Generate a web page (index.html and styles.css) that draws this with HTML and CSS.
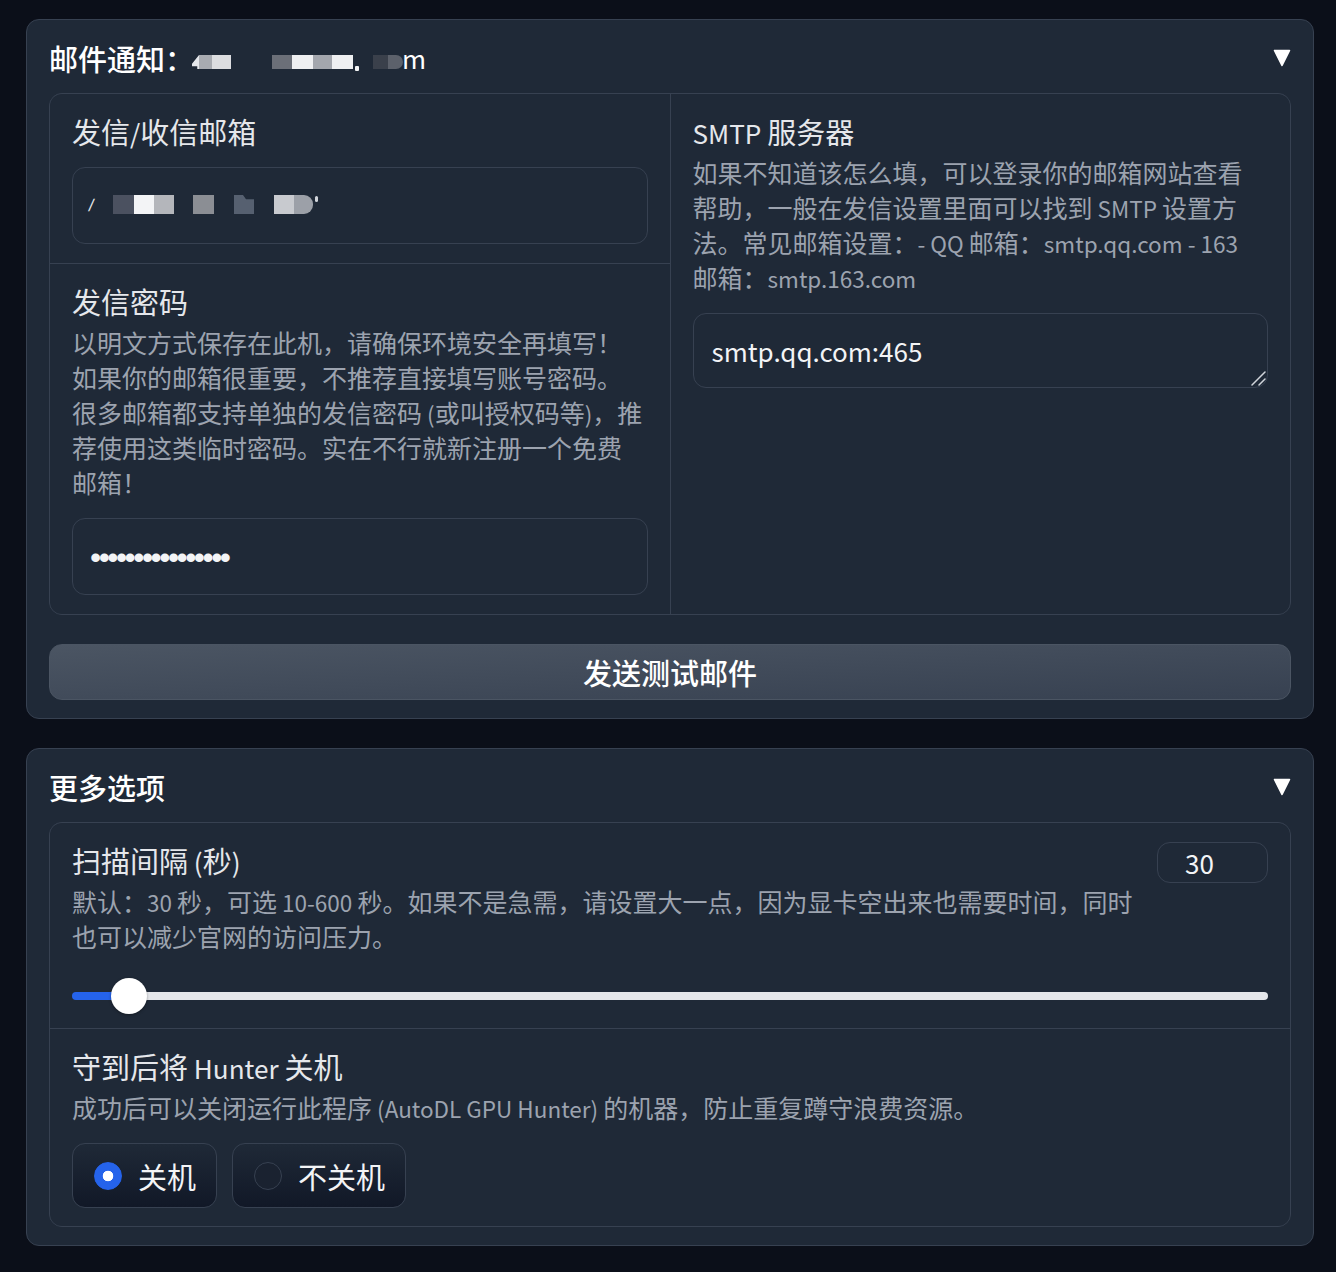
FILE: index.html
```html
<!DOCTYPE html>
<html lang="zh-CN">
<head>
<meta charset="utf-8">
<title>AutoDL GPU Hunter</title>
<link rel="stylesheet" href="styles.css">
</head>
<body>
<div class="page">
  <section class="panel">
    <div class="acc-head">
      <div class="acc-title">邮件通知：<span class="mask"><i class="c h0"></i><i class="c h1"></i><i class="c h2"></i><i class="c h3"></i><i class="c h4"></i><i class="c h5"></i><i class="c h6"></i><i class="c hdot"></i><i class="c h7"></i><i class="c h8"></i><span class="hm">m</span></span></div>
      <svg class="caret" viewBox="0 0 18 18"><path d="M1.5 1.5H16.5L9 16.5Z" fill="#fff" stroke="#fff" stroke-width="1.6" stroke-linejoin="round"/></svg>
    </div>
    <div class="form two">
      <div class="col">
        <div class="block">
          <div class="label">发信<span class="en">/</span>收信邮箱</div>
          <div class="input fake"><span class="slash">/</span><i class="c e1"></i><i class="c e2"></i><i class="c e3"></i><i class="c e4"></i><i class="c e5"></i><i class="c e6"></i><i class="c e7"></i><i class="c e8"></i></div>
        </div>
        <div class="block">
          <div class="label has-info">发信密码</div>
          <div class="info">以明文方式保存在此机，请确保环境安全再填写！如果你的邮箱很重要，不推荐直接填写账号密码。很多邮箱都支持单独的发信密码<span class="en"> (</span>或叫授权码等<span class="en">)</span>，推荐使用这类临时密码。实在不行就新注册一个免费邮箱！</div>
          <input class="input pw" type="text" value="••••••••••••••••" readonly>
        </div>
      </div>
      <div class="col">
        <div class="block">
          <div class="label has-info"><span class="en">SMTP </span>服务器</div>
          <div class="info">如果不知道该怎么填，可以登录你的邮箱网站查看帮助，一般在发信设置里面可以找到<span class="en"> SMTP </span>设置方法。常见邮箱设置：<span class="en">- QQ </span>邮箱：<span class="en">smtp.qq.com - 163 </span>邮箱：<span class="en">smtp.163.com</span></div>
          <textarea class="input area" rows="1">smtp.qq.com:465</textarea>
        </div>
      </div>
    </div>
    <button class="btn" type="button">发送测试邮件</button>
  </section>

  <section class="panel">
    <div class="acc-head">
      <div class="acc-title">更多选项</div>
      <svg class="caret" viewBox="0 0 18 18"><path d="M1.5 1.5H16.5L9 16.5Z" fill="#fff" stroke="#fff" stroke-width="1.6" stroke-linejoin="round"/></svg>
    </div>
    <div class="form">
      <div class="block slider-block">
        <div class="row-head">
          <div class="grow">
            <div class="label has-info">扫描间隔<span class="en"> (</span>秒<span class="en">)</span></div>
            <div class="info wide">默认：<span class="en">30 </span>秒，可选<span class="en"> 10-600 </span>秒。如果不是急需，请设置大一点，因为显卡空出来也需要时间，同时也可以减少官网的访问压力。</div>
          </div>
          <input class="num" type="number" value="30" min="10" max="600">
        </div>
        <input class="range" type="range" min="10" max="600" value="30" style="--fill: 4.7%">
      </div>
      <div class="block last">
        <div class="label has-info">守到后将<span class="en"> Hunter </span>关机</div>
        <div class="info wide">成功后可以关闭运行此程序<span class="en"> (AutoDL GPU Hunter) </span>的机器，防止重复蹲守浪费资源。</div>
        <div class="radios">
          <label class="radio"><span class="dot on"></span><span>关机</span></label>
          <label class="radio"><span class="dot"></span><span>不关机</span></label>
        </div>
      </div>
    </div>
  </section>
</div>
</body>
</html>
```
FILE: styles.css
```css
* { box-sizing: border-box; }
html, body { margin: 0; background: #0b0f19; }
body {
  font-family: "Noto Sans CJK SC", "Noto Sans", sans-serif;
  color: #e5e7eb;
  min-height: 1272px;
}
.page { padding: 19px 0 27px 26px; }

/* Latin runs: the CJK font's Latin is drawn ~11% larger than Source Sans */
.en { font-size: 0.9em; line-height: 1; }

.panel {
  width: 1288px;
  background: #1f2937;
  border: 1px solid #374151;
  border-radius: 13px;
  padding: 20px 22px 18px;
}
.panel + .panel { margin-top: 29px; }

.acc-head {
  display: flex;
  align-items: center;
  justify-content: space-between;
  height: 36px;
  margin-bottom: 17px;
}
.acc-title {
  display: flex;
  align-items: center;
  font-size: 29px;
  line-height: 36px;
  font-weight: 500;
  color: #fff;
  white-space: nowrap;
}
.caret { width: 18px; height: 18px; flex: none; }

/* redaction mosaic */
.mask { display: inline-flex; align-items: center; height: 36px; }
.c { display: block; font-style: normal; }
.mask .c { height: 14px; margin-top: 8px; }
.h0 { width: 7px; margin-left: -2px; background: #e5e7eb; clip-path: polygon(100% 0, 100% 100%, 75% 100%, 75% 80%, 0 80%, 0 62%); }
.h1 { width: 13px; background: #a8abb1; }
.h2 { width: 19px; background: #dcdde0; }
.h3 { width: 20px; margin-left: 41px; background: #6b6f78; }
.h4 { width: 21px; background: #eeeff1; }
.h5 { width: 19px; background: #a3a6ad; }
.h6 { width: 21px; background: #eeeff1; }
.mask .hdot { width: 4px; height: 5px; margin: 21px 0 0 2px; background: #f3f4f6; border-radius: 1px; }
.h7 { width: 15px; margin-left: 14px; background: #3a404b; }
.h8 { width: 15px; background: #5c616b; border-radius: 0 7px 7px 0; }
.hm { display: block; font-size: 26px; font-weight: 400; margin-left: -1px; }

.form {
  display: grid;
  gap: 1px;
  background: #374151;
  border: 1px solid #374151;
  border-radius: 13px;
  overflow: hidden;
}
.form.two { grid-template-columns: 1fr 1fr; }
.col { display: flex; flex-direction: column; gap: 1px; }
.col > .block:last-child { flex: 1; }

.block {
  background: #1f2937;
  padding: 20px 22px 19px;
}
.block.slider-block { padding-bottom: 14px; }
.block.last { padding-bottom: 18px; }

.label {
  font-size: 29px;
  line-height: 34px;
  color: #e5e7eb;
  margin-bottom: 19px;
}
.label.has-info { margin-bottom: 7px; }
.info {
  font-size: 25px;
  line-height: 35px;
  color: #9ca3af;
  margin-bottom: 18px;
  padding-right: 2px;
}
.info.wide { padding-right: 0; }

.input {
  display: block;
  width: 100%;
  height: 77px;
  margin: 0;
  background: #1f2937;
  border: 1px solid #374151;
  border-radius: 13px;
  padding: 19px 18px;
  font-family: "Noto Sans CJK SC", "Noto Sans", sans-serif;
  font-size: 26px;
  line-height: 37px;
  color: #f3f4f6;
  outline: none;
}
.input.fake { display: flex; align-items: center; padding-top: 0; padding-bottom: 0; }
.slash {
  display: block;
  width: 9px;
  margin-left: -2px;
  font-family: "Liberation Sans", sans-serif;
  font-size: 17px;
  line-height: 20px;
  color: #e5e7eb;
  transform: skewX(-10deg);
}
.input.fake .c { height: 19px; margin-top: -2px; }
.e1 { width: 21px; margin-left: 15px; background: #4b5160; }
.e2 { width: 20px; background: #f3f4f6; }
.e3 { width: 20px; background: #b4b6bb; }
.e4 { width: 21px; margin-left: 19px; background: #8b8e94; }
.e5 { width: 20px; margin-left: 20px; background: #566070; clip-path: polygon(0 0, 45% 0, 60% 22%, 100% 22%, 100% 100%, 0 100%); }
.e6 { width: 20px; margin-left: 20px; background: #c8cacf; }
.e7 { width: 19px; background: #9ca0a8; border-radius: 0 9px 9px 0; }
.input.fake .e8 { width: 3px; height: 6px; margin: -14px 0 0 2px; background: #d1d5db; border-radius: 2px; }

.input.pw {
  font-family: "Liberation Sans", sans-serif;
  font-size: 32px;
  line-height: 39px;
  letter-spacing: -2.55px;
  padding: 19px 17px 17px;
  color: #f3f4f6;
}
.input.area {
  height: 75px;
  padding: 18px 18px;
  resize: none;
  overflow: hidden;
  background: #1f2937 url("data:image/svg+xml,%3Csvg xmlns='http://www.w3.org/2000/svg' width='16' height='16' viewBox='0 0 16 16'%3E%3Cpath d='M2 15L15 2M9 15L15 9' stroke='%23d1d5db' stroke-width='1.5' stroke-linecap='round'/%3E%3C/svg%3E") no-repeat right 1px bottom 1px / 16px 16px;
}

.btn {
  display: block;
  width: 100%;
  height: 56px;
  margin-top: 29px;
  border: 1px solid #4b5563;
  border-radius: 13px;
  background: linear-gradient(to bottom right, #4b5563, #374151);
  color: #fff;
  font-family: "Noto Sans CJK SC", "Noto Sans", sans-serif;
  font-size: 29px;
  line-height: 34px;
  font-weight: 500;
  padding: 0;
}

.row-head { display: flex; gap: 14px; align-items: flex-start; }
.grow { flex: 1; min-width: 0; }
.num {
  flex: none;
  width: 111px;
  height: 41px;
  margin: -1px 0 0;
  border: 1px solid #374151;
  border-radius: 13px;
  background: #1f2937;
  color: #f3f4f6;
  font-family: "Noto Sans CJK SC", "Noto Sans", sans-serif;
  font-size: 26px;
  line-height: 39px;
  padding: 0 0 0 27px;
  outline: none;
  -moz-appearance: textfield;
  appearance: textfield;
}
.num::-webkit-inner-spin-button,
.num::-webkit-outer-spin-button { -webkit-appearance: none; margin: 0; }

.range {
  display: block;
  width: 100%;
  height: 36px;
  margin: 6px 0 0;
  padding: 0;
  -webkit-appearance: none;
  appearance: none;
  background: transparent;
}
.range::-webkit-slider-runnable-track {
  height: 8px;
  border-radius: 4px;
  background: linear-gradient(to right, #2563eb var(--fill), #e5e7eb var(--fill));
}
.range::-webkit-slider-thumb {
  -webkit-appearance: none;
  width: 36px;
  height: 36px;
  margin-top: -14px;
  border-radius: 50%;
  background: #fff;
  box-shadow: 0 1px 3px rgba(0, 0, 0, 0.35);
}

.radios { display: flex; gap: 15px; }
.radio {
  display: flex;
  align-items: center;
  gap: 16px;
  height: 65px;
  padding: 0 20px 0 21px;
  border: 1px solid #374151;
  border-radius: 13px;
  background: linear-gradient(to top, #111827, #1f2937);
  font-size: 29px;
  line-height: 34px;
  color: #f3f4f6;
}
.dot {
  width: 28px;
  height: 28px;
  flex: none;
  border-radius: 50%;
  border: 1px solid #374151;
  background: #1a2230;
}
.dot.on {
  border-color: #2563eb;
  background: radial-gradient(circle, #fff 0 5px, #2563eb 5.6px);
}
```
